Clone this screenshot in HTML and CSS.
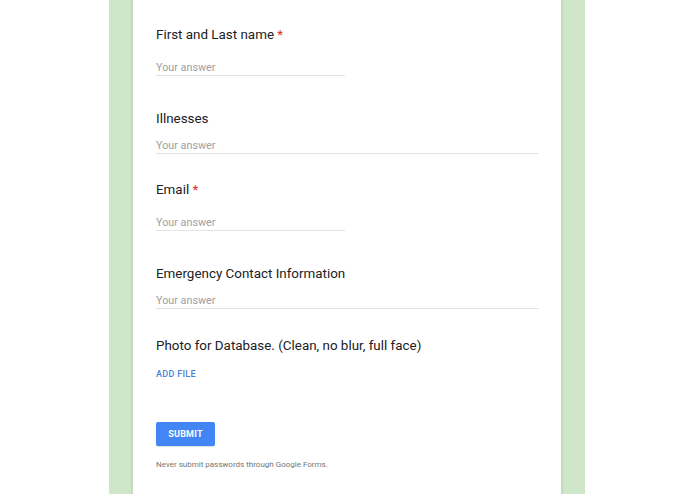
FILE: index.html
```html
<!DOCTYPE html>
<html>
<head>
<meta charset="utf-8">
<link rel="stylesheet" href="styles.css">
</head>
<body>
<div class="page">
  <div class="band">
    <div class="card">
      <div class="item short">
        <div class="label">First and Last name <span class="req">*</span></div>
        <div class="answer">Your answer</div>
      </div>
      <div class="item long">
        <div class="label">Illnesses</div>
        <div class="answer">Your answer</div>
      </div>
      <div class="item short">
        <div class="label">Email <span class="req">*</span></div>
        <div class="answer">Your answer</div>
      </div>
      <div class="item long">
        <div class="label">Emergency Contact Information</div>
        <div class="answer">Your answer</div>
      </div>
      <div class="item file">
        <div class="label">Photo for Database. (Clean, no blur, full face)</div>
        <div class="addfile">ADD FILE</div>
      </div>
      <div class="actions">
        <button class="submit">SUBMIT</button>
      </div>
      <div class="note">Never submit passwords through Google Forms.</div>
    </div>
  </div>
</div>
</body>
</html>
```
FILE: styles.css
```css
html, body {
  margin: 0;
  padding: 0;
  background: #ffffff;
  font-family: Roboto, "Liberation Sans", Arial, sans-serif;
}
.page {
  height: 494px;
  overflow: hidden;
  display: flex;
}
.band {
  margin-left: 109px;
  width: 476px;
  height: 494px;
  background: #cfe6c8;
  display: flex;
  justify-content: center;
}
.card {
  width: 428px;
  height: 494px;
  background: #ffffff;
  box-shadow: 0 0 0 1px #c7d8c1, 0 0 2px 1px #b5c8ae;
  padding: 25px 22px 0 23px;
  box-sizing: border-box;
}
.item {
  display: flex;
  flex-direction: column;
  align-items: flex-start;
}
.label {
  font-size: 13.4px;
  line-height: 20px;
  color: #202124;
}
.req {
  color: #d93025;
}
.answer {
  font-size: 10.8px;
  line-height: 14px;
  color: #a0a0a0;
  border-bottom: 1px solid #e4e4e4;
}
.short .answer {
  width: 189px;
  margin-top: 16px;
}
.long .answer {
  width: 383px;
  margin-top: 10px;
}
.short + .item {
  margin-top: 33px;
}
.long + .item {
  margin-top: 26px;
}
.long + .file {
  margin-top: 27px;
}
.addfile {
  margin-top: 10px;
  font-size: 9px;
  line-height: 16px;
  font-weight: 500;
  color: #4a7fdc;
  letter-spacing: 0.3px;
}
.actions {
  margin-top: 40px;
}
.submit {
  width: 59px;
  height: 24px;
  background: #4285f4;
  border: none;
  border-radius: 2px;
  color: #ffffff;
  font-family: inherit;
  font-size: 9px;
  font-weight: 700;
  letter-spacing: 0.2px;
  padding: 0;
  box-shadow: 0 1px 1px rgba(0,0,0,0.15);
}
.note {
  margin-top: 13px;
  font-size: 8px;
  line-height: 12px;
  color: #757575;
}
```
